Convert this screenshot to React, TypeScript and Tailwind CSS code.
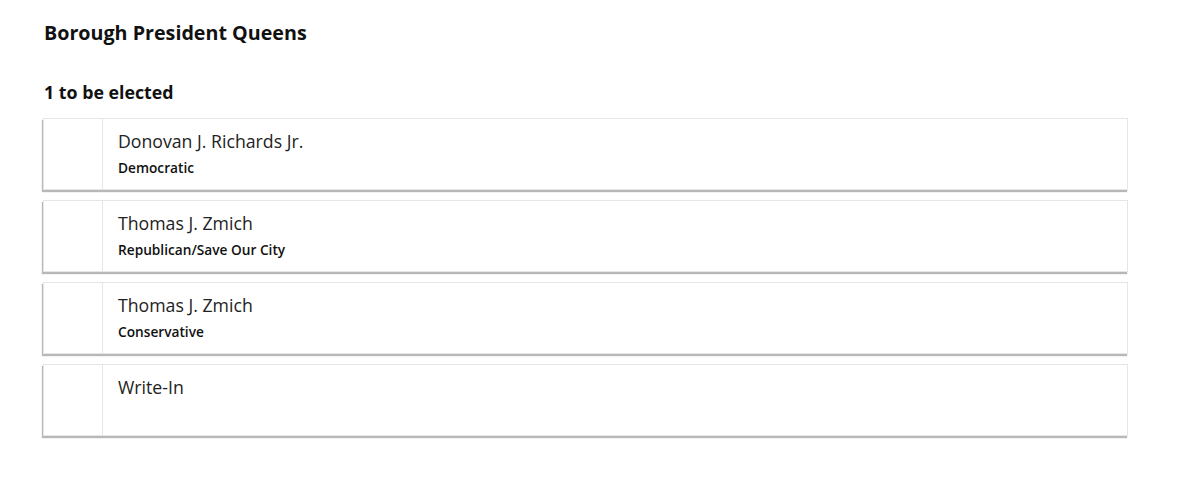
const candidates = [
  { name: "Donovan J. Richards Jr.", party: "Democratic" },
  { name: "Thomas J. Zmich", party: "Republican/Save Our City" },
  { name: "Thomas J. Zmich", party: "Conservative" },
  { name: "Write-In", party: "" },
];

export default function App() {
  return (
    <div className="min-h-[485px] bg-white pl-[44px] pr-[72px] pt-[20px] font-['Open_Sans',sans-serif] text-[#111]">
      {/* contest header */}
      <h1 className="text-[19.7px] font-bold leading-[26px]">Borough President Queens</h1>
      <h2 className="mt-[34px] text-[17.8px] font-bold leading-[24px]">1 to be elected</h2>

      {/* candidate rows */}
      <div className="ml-[-1px] mt-[14px] flex flex-col gap-[10px]">
        {candidates.map((c, i) => (
          <div
            key={i}
            className="flex h-[72px] border border-[#e6e6e6] bg-white shadow-[-1px_2px_1px_rgba(0,0,0,0.28)]"
          >
            <div className="w-[59px] shrink-0 border-r border-[#e6e6e6]" />
            <div className="pl-[15px] pt-[10px]">
              <div className="text-[17.7px] leading-[24px] text-[#222]">{c.name}</div>
              {c.party && (
                <div className="mt-[6px] text-[13.7px] font-semibold leading-[18px] text-[#111]">
                  {c.party}
                </div>
              )}
            </div>
          </div>
        ))}
      </div>
    </div>
  );
}
